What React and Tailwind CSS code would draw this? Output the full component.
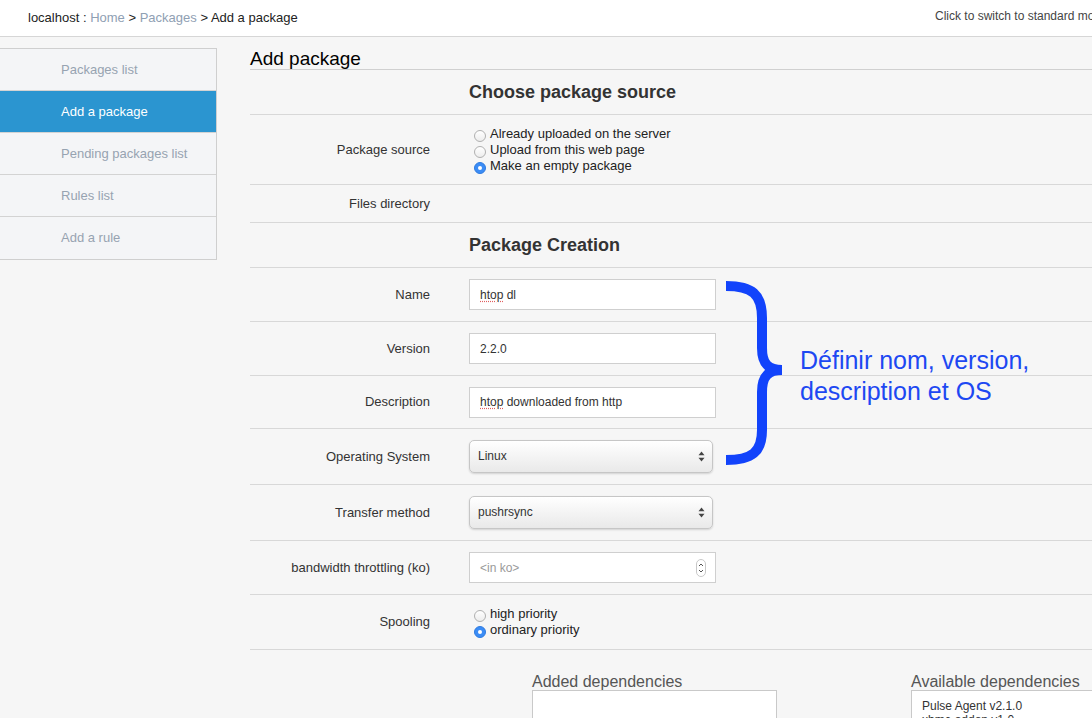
const menu = [
  { label: "Packages list" },
  { label: "Add a package", active: true },
  { label: "Pending packages list" },
  { label: "Rules list" },
  { label: "Add a rule" },
];

const Radio = ({ checked, label }) => (
  <div className="flex items-center h-[16px]">
    {checked ? (
      <span className="relative top-[2px] flex items-center justify-center w-[12px] h-[12px] rounded-full bg-[#3b8cf5] border border-[#2f7be0]">
        <span className="w-[4px] h-[4px] rounded-full bg-white" />
      </span>
    ) : (
      <span className="relative top-[2px] w-[12px] h-[12px] rounded-full border border-[#b0b0b0] bg-gradient-to-b from-white to-[#ededed]" />
    )}
    <span className="ml-[4px] text-[13px] text-[#222]">{label}</span>
  </div>
);

const Row = ({ label, h, children }) => (
  <div className={"flex items-center border-b border-[#d8d8d8] " + h}>
    <div className="w-[180px] text-right text-[13px] text-[#333] shrink-0">{label}</div>
    <div className="ml-[39px] flex-1">{children}</div>
  </div>
);

const Section = ({ title, h }) => (
  <div className={"flex items-center border-b border-[#d8d8d8] pl-[219px] " + h}>
    <span className="text-[18px] font-bold text-[#333]">{title}</span>
  </div>
);

const TextInput = ({ children }) => (
  <div className="w-[247px] h-[31px] bg-white border border-[#cfcfcf] flex items-center pl-[10px] text-[12px] text-[#333]">
    {children}
  </div>
);

const Arrows = () => (
  <svg width="7" height="11" viewBox="0 0 7 11" className="shrink-0">
    <path d="M3.5 0.5 L6.5 4.3 L0.5 4.3 Z" fill="#444" />
    <path d="M3.5 10.5 L6.5 6.7 L0.5 6.7 Z" fill="#444" />
  </svg>
);

const Select = ({ value }) => (
  <div className="w-[244px] h-[33px] rounded-[5px] border border-[#c6c6c6] bg-gradient-to-b from-white to-[#e9e9e9] shadow-[0_1px_2px_rgba(0,0,0,0.15)] flex items-center justify-between pl-[8px] pr-[7px] text-[12px] text-[#333]">
    <span className="relative top-[-1px]">{value}</span>
    <Arrows />
  </div>
);

const Brace = () => (
  <svg width="62" height="190" viewBox="0 0 62 190" className="absolute left-[474px] top-[230px]">
    <path
      d="M2 8 C28 8 38 16 38 40 L38 70 C38 86 44 92 58 92 C44 92 38 98 38 114 L38 152 C38 174 28 182 2 182"
      fill="none"
      stroke="#1243fb"
      strokeWidth="10"
    />
  </svg>
);

export default function App() {
  return (
    <div className="w-[1092px] h-[718px] overflow-hidden bg-[#f6f6f6] font-['Liberation_Sans',Arial,sans-serif]">
      <div className="h-[37px] bg-white border-b border-[#d6d6d6] flex items-center">
        <div className="pl-[28px] text-[13px] text-[#222]">
          localhost : <span className="text-[#8fa0b3]">Home</span> &gt;{" "}
          <span className="text-[#8fa0b3]">Packages</span> &gt; Add a package
        </div>
        <div className="ml-auto w-[157px] overflow-hidden whitespace-nowrap text-[12px] text-[#444] relative top-[-2px]">
          Click to switch to standard mode
        </div>
      </div>

      <div className="flex pt-[11px]">
        <div className="w-[217px] shrink-0 self-start border border-l-0 border-[#cfcfcf] bg-[#f4f5f7]">
          {menu.map((m, i) => (
            <div
              key={m.label}
              className={
                "h-[42px] flex items-center pl-[61px] text-[13px] " +
                (i < menu.length - 1 ? "border-b border-[#d3d3d3] " : "") +
                (m.active ? "bg-[#2b95d0] text-white" : "text-[#97a3b1]")
              }
            >
              {m.label}
            </div>
          ))}
        </div>

        <div className="ml-[33px] flex-1 relative">
          <div className="h-[22px] border-b border-[#d0d0d0] text-[19px] leading-[21px] text-black">Add package</div>

          <Section title="Choose package source" h="h-[45px]" />
          <Row label="Package source" h="h-[70px]">
            <div className="ml-[5px] flex flex-col">
              <Radio label="Already uploaded on the server" />
              <Radio label="Upload from this web page" />
              <Radio checked label="Make an empty package" />
            </div>
          </Row>
          <Row label="Files directory" h="h-[38px]" />
          <Section title="Package Creation" h="h-[45px]" />
          <Row label="Name" h="h-[54px]">
            <TextInput>
              <span className="underline decoration-dotted decoration-[#e06060] underline-offset-2">htop</span>&nbsp;dl
            </TextInput>
          </Row>
          <Row label="Version" h="h-[54px]">
            <TextInput>2.2.0</TextInput>
          </Row>
          <Row label="Description" h="h-[53px]">
            <TextInput>
              <span className="underline decoration-dotted decoration-[#e06060] underline-offset-2">htop</span>&nbsp;downloaded from http
            </TextInput>
          </Row>
          <Row label="Operating System" h="h-[56px]">
            <Select value="Linux" />
          </Row>
          <Row label="Transfer method" h="h-[56px]">
            <Select value="pushrsync" />
          </Row>
          <Row label="bandwidth throttling (ko)" h="h-[54px]">
            <div className="w-[247px] h-[31px] bg-white border border-[#cfcfcf] flex items-center justify-between pl-[10px] pr-[9px] text-[12px] text-[#9a9a9a]">
              <span>&lt;in ko&gt;</span>
              <svg width="10" height="18" viewBox="0 0 10 18">
                <rect x="0.5" y="0.5" width="9" height="17" rx="4.5" fill="#fff" stroke="#c8c8c8" />
                <path d="M3 7 L5 5 L7 7" fill="none" stroke="#555" strokeWidth="1" />
                <path d="M3 11 L5 13 L7 11" fill="none" stroke="#555" strokeWidth="1" />
              </svg>
            </div>
          </Row>
          <Row label="Spooling" h="h-[55px]">
            <div className="ml-[5px] flex flex-col">
              <Radio label="high priority" />
              <Radio checked label="ordinary priority" />
            </div>
          </Row>

          <div className="flex pl-[282px] pt-[23px]">
            <div className="w-[245px]">
              <div className="text-[16px] text-[#555] leading-[17px]">Added dependencies</div>
              <div className="h-[60px] bg-white border border-[#c9c9c9]" />
            </div>
            <div className="ml-[134px] flex-1">
              <div className="text-[16px] text-[#555] leading-[17px]">Available dependencies</div>
              <div className="h-[60px] bg-white border border-r-0 border-[#c9c9c9] pl-[10px] pt-[8px] text-[12px] text-[#333] leading-[14px]">
                <div>Pulse Agent v2.1.0</div>
                <div>xbmc-addon v1.0</div>
              </div>
            </div>
          </div>

          <Brace />
          <div className="absolute left-[550px] top-[297px] text-[25px] leading-[31px] text-[#1d48f2]">
            Définir nom, version,
            <br />
            description et OS
          </div>
        </div>
      </div>
    </div>
  );
}
